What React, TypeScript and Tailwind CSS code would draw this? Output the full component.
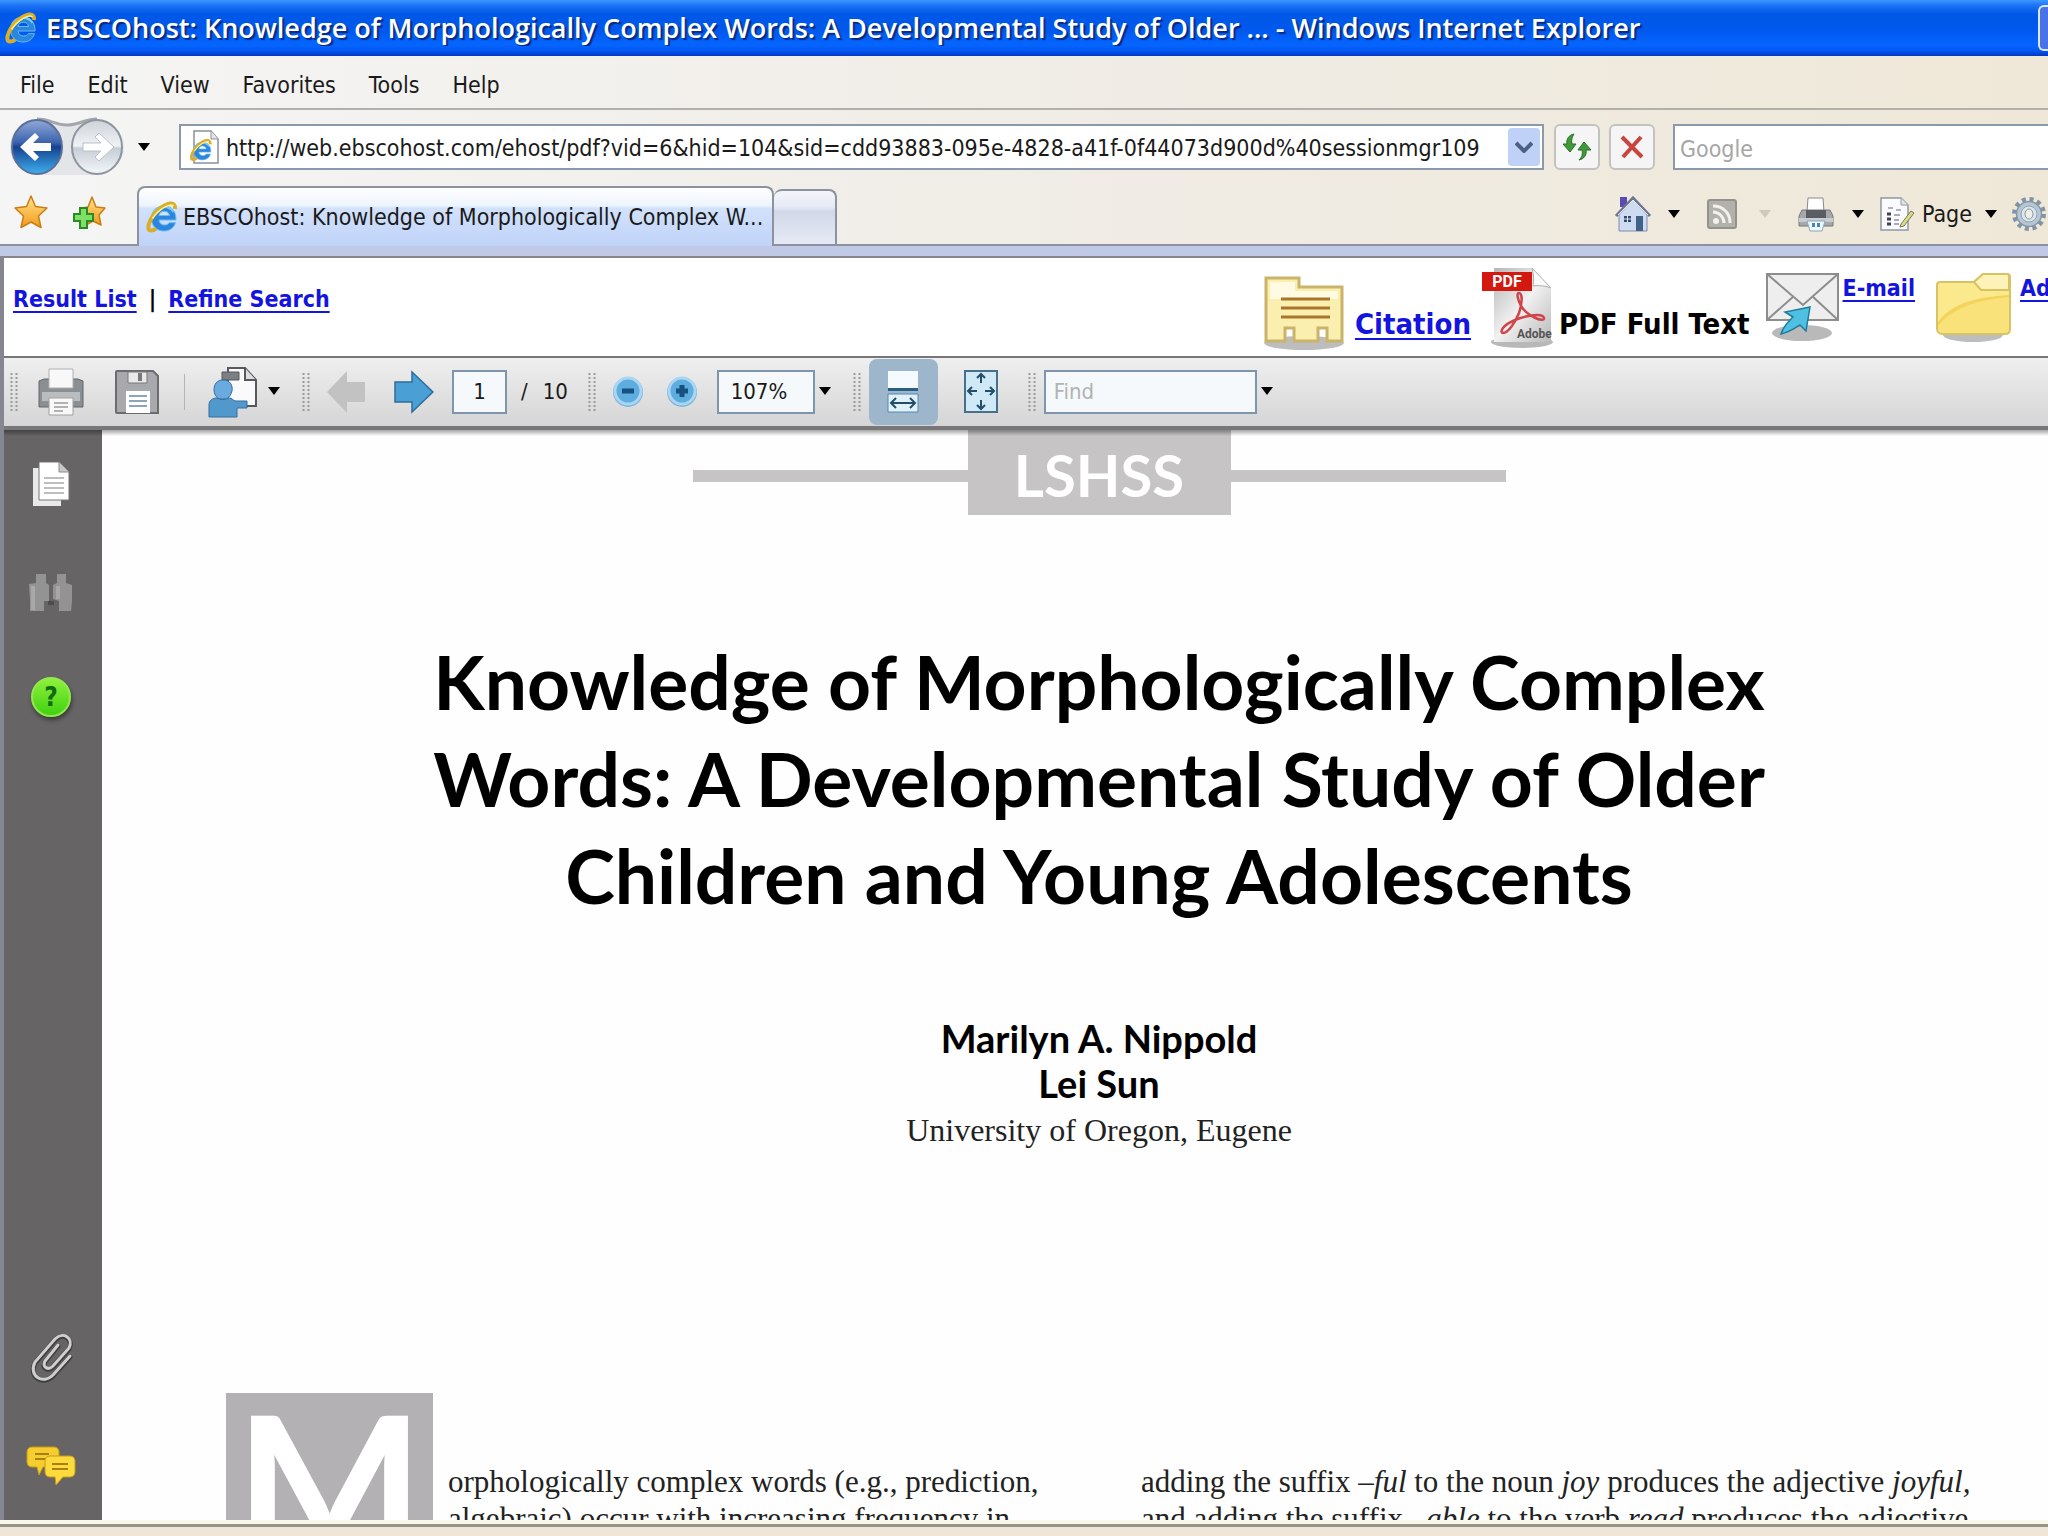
import type { ReactNode } from 'react'

const menus = ['File', 'Edit', 'View', 'Favorites', 'Tools', 'Help']

function Caret({ className = '', dim = false }: { className?: string; dim?: boolean }) {
  return (
    <button aria-label="More options" className={`shrink-0 ${className}`}>
      <svg viewBox="0 0 14 9" className="w-[14px] h-[9px]">
        <path d="M1 0h12L7 8z" fill={dim ? '#cfc9bd' : '#000'} />
      </svg>
    </button>
  )
}

function Grip({ className = '' }: { className?: string }) {
  return (
    <svg viewBox="0 0 8 38" className={`w-2 h-[38px] shrink-0 ${className}`}>
      <path d="M1.5 0v38M6.5 0v38" stroke="#9a9a9a" strokeWidth="2" strokeDasharray="2 2" />
    </svg>
  )
}

function IeLogo({ className = '' }: { className?: string }) {
  return (
    <svg viewBox="0 0 34 34" className={`shrink-0 ${className}`}>
      <path
        d="M31 20H14c.5 3.300 2.500 5 5.500 5 2.300 0 3.800-.8 4.800-2.300H30.500C28.800 28 24.600 31 19 31 11.500 31 6.500 25.800 6.500 18.500S11.500 6 19 6s12.200 5 12 14zM24.500 15.500c-.5-2.700-2.300-4.200-5.200-4.200s-4.800 1.500-5.300 4.200z"
        fill="#2b86dd"
        stroke="#6db9f2"
        strokeWidth="1"
      />
      <path d="M8 14c2-4.500 6-7 11-7 4 0 7.500 1.800 9.500 5" stroke="#7cc8f7" strokeWidth="2" fill="none" />
      <path
        d="M30 9c.6-3.500-1.200-6-5-5.500C18.500 4.300 9 12.500 5 21c-2.500 5.400-2.300 9.500 1.200 9.500 1.500 0 3.300-.7 5-1.900"
        stroke="#d9ae2a"
        strokeWidth="4"
        fill="none"
      />
      <path d="M28.500 6C25 2.500 14 9 7.500 18.500" stroke="#fff08a" strokeWidth="1.500" fill="none" />
    </svg>
  )
}

function NavArrows() {
  return (
    <svg viewBox="0 0 116 60" className="w-[116px] h-[60px]">
      <defs>
        <linearGradient id="back" x1="0" y1="0" x2="0" y2="1">
          <stop offset="0" stopColor="#92a9d8" />
          <stop offset=".42" stopColor="#3a62ad" />
          <stop offset=".5" stopColor="#15418f" />
          <stop offset="1" stopColor="#3fb0f0" />
        </linearGradient>
        <linearGradient id="fwd" x1="0" y1="0" x2="0" y2="1">
          <stop offset="0" stopColor="#cdd2d9" />
          <stop offset=".48" stopColor="#f0f2f5" />
          <stop offset=".52" stopColor="#c6cdd6" />
          <stop offset="1" stopColor="#f4f8fb" />
        </linearGradient>
      </defs>
      <path d="M27 2c14 0 17 6 30 6S74 2 87 2c36 6 36 50 0 56H27C-9 52-9 8 27 2z" fill="#e3e5e8" />
      <path d="M27 2c14 0 17 6 30 6S74 2 87 2" stroke="#a3a7ad" strokeWidth="3" fill="none" />
      <ellipse cx="27" cy="30" rx="25" ry="27" fill="url(#back)" stroke="#5b6f97" strokeWidth="2" />
      <ellipse cx="87" cy="30" rx="25" ry="27" fill="url(#fwd)" stroke="#8f959e" strokeWidth="2" />
      <path d="M10 30l15-14 4 4-6 6h18v8H23l6 6-4 4z" fill="#fff" />
      <path d="M104 30L89 16l-4 4 6 6H73v8h18l-6 6 4 4z" fill="#fff" stroke="#b9c0ca" strokeWidth="1" />
    </svg>
  )
}

function Star({ plus = false }: { plus?: boolean }) {
  return (
    <svg viewBox="0 0 34 34" className="w-[34px] h-[34px]">
      <defs>
        <linearGradient id="star" x1="0" y1="0" x2="0" y2="1">
          <stop offset="0" stopColor="#ffe48a" />
          <stop offset="1" stopColor="#f39a1c" />
        </linearGradient>
      </defs>
      <path
        d={
          plus
            ? 'M20 2l4 10 9 1-6 7 2 10-8-4-7 4 0-10-4-7 6-1z'
            : 'M17 1l4.500 10.500L33 13l-8.500 8L27 32.500 17 27 7 32.500 9.500 21 1 13l11.500-1.500z'
        }
        fill="url(#star)"
        stroke="#c97e14"
        strokeWidth="1.500"
        strokeLinejoin="round"
      />
      {plus && (
        <path
          d="M8 13h7v6h6v7h-6v7H8v-7H2v-7h6z"
          fill="#7fe066"
          stroke="#2a8a26"
          strokeWidth="2"
        />
      )}
    </svg>
  )
}

function HomeIcon() {
  return (
    <svg viewBox="0 0 38 38" className="w-[38px] h-[38px]">
      <path d="M6 2h7v10H6z" fill="#5a4bb5" />
      <path d="M5 19L19 5l14 14v17H5z" fill="#cfdbf0" stroke="#7d8cab" />
      <path d="M2 21L19 3l17 18" stroke="#6f7690" strokeWidth="3" fill="none" />
      <path d="M4 20L19 5l15 15" stroke="#e9edf6" strokeWidth="1" fill="none" />
      <path d="M10 21h7v6h-7z" fill="#30496f" />
      <path d="M13.500 21v6M10 24h7" stroke="#dfe8f7" />
      <path d="M22 21h7v15h-7z" fill="#3f6288" />
    </svg>
  )
}

function RssIcon() {
  return (
    <svg viewBox="0 0 30 30" className="w-[30px] h-[30px]">
      <rect x="1" y="1" width="28" height="28" rx="2" fill="#b3b1ab" stroke="#94928c" strokeWidth="2" />
      <circle cx="9" cy="22" r="3" fill="#f3f1ec" />
      <path d="M6 13c6 0 11 5 11 11M6 7c10 0 17 7 17 17" stroke="#f3f1ec" strokeWidth="3" fill="none" />
    </svg>
  )
}

function PrintIcon() {
  return (
    <svg viewBox="0 0 36 36" className="w-9 h-9">
      <path d="M10 2h15l1 14H9z" fill="#fff" stroke="#8a8a8a" />
      <path d="M4 14h28l3 6v10H1V20z" fill="#a6a8ac" stroke="#75777b" />
      <path d="M8 14h20v8H8z" fill="#5a5d62" />
      <path d="M1 22h34v4H1z" fill="#c9ccd0" />
      <path d="M9 25h18l-3 10H12z" fill="#eef7fd" stroke="#86a9bd" />
      <path d="M14 27h3v4h-3zM19 27h3v4h-3z" fill="#4c88ad" />
    </svg>
  )
}

function PageIcon() {
  return (
    <svg viewBox="0 0 36 36" className="w-9 h-9">
      <path d="M1 2h20l7 7v25H1z" fill="#fbfbfd" stroke="#9098a6" strokeWidth="1.500" />
      <path d="M21 2v7h7" fill="#dfe4ec" stroke="#9098a6" />
      <path d="M8 12h5M16 14h5" stroke="#a9b3c5" strokeWidth="2" />
      <path d="M7 18h4M7 23h4M7 28h4" stroke="#3c4356" strokeWidth="3" />
      <path d="M14 19h6M14 24h5M14 28h5" stroke="#a9a9c0" strokeWidth="2" />
      <path d="M21 28l10-13 3 2-10 13-4 1z" fill="#dcd98a" stroke="#777a55" />
    </svg>
  )
}

function GearIcon() {
  return (
    <svg viewBox="0 0 36 36" className="w-9 h-9">
      <circle cx="18" cy="18" r="14.500" fill="none" stroke="#8195a6" strokeWidth="5" strokeDasharray="4 3.600" />
      <circle cx="18" cy="18" r="12.500" fill="#b6c7d3" stroke="#8397a8" strokeWidth="1.500" />
      <circle cx="18" cy="18" r="8" fill="#dbe6ec" stroke="#8fa3b2" />
      <ellipse cx="18" cy="18" rx="4" ry="5" fill="#f0eee6" stroke="#8398a6" />
    </svg>
  )
}

function CitationIcon() {
  return (
    <svg viewBox="0 0 82 80" className="w-[82px] h-20">
      <ellipse cx="41" cy="70" rx="40" ry="7" fill="#bdbdbd" />
      <path
        d="M3 5h33v9h43v54H64V55h-9v13H31V55h-9v13H3z"
        fill="#fbefb0"
        stroke="#c9b46a"
        strokeWidth="3"
      />
      <path d="M7 9h25v9h43v8H7z" fill="#fffbe2" />
      <path d="M18 26h49M18 35h49M18 44h49" stroke="#a8752a" strokeWidth="3" />
    </svg>
  )
}

function PdfIcon() {
  return (
    <svg viewBox="0 0 72 84" className="w-[72px] h-[84px]">
      <defs>
        <linearGradient id="sheet" x1="0" y1="0" x2="1" y2="1">
          <stop offset="0" stopColor="#b5b5b5" />
          <stop offset=".5" stopColor="#f1f1f1" />
          <stop offset="1" stopColor="#b9b9b9" />
        </linearGradient>
      </defs>
      <ellipse cx="41" cy="76" rx="31" ry="6" fill="#b8b8b8" />
      <path d="M13 2h38l19 20v54H13z" fill="url(#sheet)" />
      <path d="M51 2c2 7 2 13 1 18 7-1 13 0 18 2z" fill="#fafafa" stroke="#b0b0b0" />
      <path d="M1 6h50v19H1z" fill="#d3180f" />
      <text x="26" y="21" textAnchor="middle" fontFamily="Roboto" fontWeight="700" fontSize="16" fill="#fff">
        PDF
      </text>
      <path
        d="M38 27c4 0 3 12 0 20-4 10-11 20-16 20-4-1 0-8 12-13 12-5 28-7 29-2s-16-1-23-12c-3-6-5-13-2-13z"
        fill="none"
        stroke="#d1444a"
        strokeWidth="2.500"
      />
      <text x="36" y="72" fontFamily="Roboto" fontSize="12" fill="#555">
        Adobe
      </text>
    </svg>
  )
}

function MailIcon() {
  return (
    <svg viewBox="0 0 74 72" className="w-[74px] h-[72px]">
      <ellipse cx="36" cy="62" rx="30" ry="8" fill="#b9b9b9" />
      <path d="M1 3h71v46H1z" fill="#eeeeee" stroke="#8d8d8d" strokeWidth="2" />
      <path d="M1 3l36 31L72 3M1 49l27-24M72 49L46 25" fill="none" stroke="#8d8d8d" strokeWidth="2" />
      <path d="M44 36l-4 24-6-6c-5 3-10 7-19 9 3-9 8-13 12-17l-8-5z" fill="#4fc0e2" stroke="#1c7d9e" strokeWidth="1.500" />
    </svg>
  )
}

function FolderIcon() {
  return (
    <svg viewBox="0 0 76 72" className="w-[76px] h-[72px]">
      <ellipse cx="38" cy="63" rx="30" ry="7" fill="#bdbdbd" />
      <path
        d="M2 13c0-2 1-3 3-3h34l9-8h24c2 0 3 1 3 3v52c0 3-2 5-5 5H8c-4 0-6-2-6-6z"
        fill="#fbe98e"
        stroke="#d8c264"
        strokeWidth="2"
      />
      <path d="M39 10l7 8h28V5c0-2-1-3-2-3H48z" fill="#fdf3b8" stroke="#d8c264" strokeWidth="2" />
      <path d="M3 50C16 32 40 25 74 23v34c0 3-2 4-5 4H8c-4 0-5-2-5-5z" fill="#f3d35a" />
      <path d="M3 54c12-16 36-26 71-29v32c0 3-2 4-5 4H8c-4 0-5-2-5-5z" fill="#f9e27a" />
    </svg>
  )
}

function PdfPrintIcon() {
  return (
    <svg viewBox="0 0 48 50" className="w-12 h-[50px]">
      <path d="M2 14l5-2h34l5 2v26H2z" fill="#8b8f92" stroke="#62666a" />
      <path d="M5 25h38v9H5z" fill="#b9bdc0" />
      <path d="M12 2h24v19H12z" fill="#f8f8f8" stroke="#b0b0b0" />
      <path d="M12 31h24v17H12z" fill="#f8f8f8" stroke="#a0a0a0" />
      <path d="M17 36h14M17 40h14M17 44h9" stroke="#9b9b9b" strokeWidth="1.500" />
    </svg>
  )
}

function SaveIcon() {
  return (
    <svg viewBox="0 0 46 46" className="w-[46px] h-[46px]">
      <path d="M3 2h36l5 5v37H3c-1 0-1-1-1-1V3s0-1 1-1z" fill="#a8a9ad" stroke="#6b6c70" strokeWidth="2" />
      <path d="M14 3h19v11H14z" fill="#e8e8e8" stroke="#77787c" />
      <path d="M24 4h4v8h-4z" fill="#77787c" />
      <path d="M12 22h24v22H12z" fill="#fff" />
      <path d="M15 27h18M15 32h18M15 37h18" stroke="#8aa6b8" strokeWidth="2" />
    </svg>
  )
}

function ShareIcon() {
  return (
    <svg viewBox="0 0 50 52" className="w-[50px] h-[52px]">
      <path d="M20 2h17l11 12v26H20z" fill="#fafafa" stroke="#55585c" strokeWidth="2" />
      <path d="M37 2v12h11" fill="#ddd" stroke="#55585c" strokeWidth="2" />
      <path d="M14 6h17v8H14z" fill="#7b7e83" stroke="#55585c" />
      <path d="M15 14c7 0 10 5 9 11-1 4-3 6-5 8h-8c-3-2-5-5-5-9 0-6 3-10 9-10z" fill="#6aaade" stroke="#336f9f" />
      <path d="M1 51V39c0-5 4-7 8-7 3 2 8 2 11 0 5 0 5 3 8 3h11v7H29v9z" fill="#5198cd" stroke="#336f9f" />
    </svg>
  )
}

function PageArrow({ back = false }: { back?: boolean }) {
  return (
    <svg viewBox="0 0 40 44" className="w-10 h-11">
      {back ? (
        <path d="M1 22L21 1v11h18v20H21v11z" fill="#c2c2c2" />
      ) : (
        <path d="M39 22L18 2v10H1v20h17v10z" fill="#4a9fd4" stroke="#2c6d9b" strokeWidth="1.500" />
      )}
    </svg>
  )
}

function ZoomGlyph({ plus = false }: { plus?: boolean }) {
  return (
    <svg viewBox="0 0 32 32" className="w-8 h-8">
      <circle cx="16" cy="16" r="15" fill="#7db4d8" />
      <circle cx="16" cy="15" r="13" fill="#5facdf" stroke="#a9d6f2" strokeWidth="3" />
      <path d={plus ? 'M10 15h12M16 9v12' : 'M10 15h12'} stroke="#17517f" strokeWidth="5" />
    </svg>
  )
}

function FitWidthIcon() {
  return (
    <svg viewBox="0 0 36 44" className="w-9 h-11">
      <path d="M3 1h30v18H3z" fill="#f4fafd" />
      <path d="M3 18h30v3H3z" fill="#2a5f84" />
      <path d="M3 24h30v18H3z" fill="#e1f1fa" stroke="#5688aa" />
      <path d="M6 33h24M11 28l-5 5 5 5M25 28l5 5-5 5" stroke="#234d69" strokeWidth="2" fill="none" />
    </svg>
  )
}

function FitPageIcon() {
  return (
    <svg viewBox="0 0 36 44" className="w-9 h-11">
      <path d="M2 1h32v41H2z" fill="#cfe9f7" stroke="#47708b" strokeWidth="2" />
      <path
        d="M18 4v9M14 8l4-4 4 4M18 39v-9M14 35l4 4 4-4M5 21h9M9 17l-4 4 4 4M31 21h-9M27 17l4 4-4 4"
        stroke="#234d69"
        strokeWidth="2"
        fill="none"
      />
    </svg>
  )
}

function SideButton({ label, children }: { label: string; children: ReactNode }) {
  return (
    <button aria-label={label} className="w-[52px] h-[52px] flex items-center justify-center">
      {children}
    </button>
  )
}

function TitleBar() {
  return (
    <header className="h-14 shrink-0 flex items-center pl-1 gap-2 overflow-hidden bg-[linear-gradient(to_bottom,#3c98ff_0%,#1c72f4_10%,#0058e6_25%,#0058ee_55%,#0566ff_80%,#0458f4_90%,#0038c4_100%)]">
      <IeLogo className="w-[34px] h-9" />
      <h1 className="flex-1 whitespace-nowrap overflow-hidden text-white font-semibold text-[27px] leading-9 font-['Open_Sans',sans-serif] [text-shadow:2px_2px_1px_#0a2a80]">
        EBSCOhost: Knowledge of Morphologically Complex Words: A Developmental Study of Older ... - Windows Internet
        Explorer
      </h1>
      <button
        aria-label="Minimize"
        className="w-[10px] h-[46px] shrink-0 rounded-l-md border-2 border-r-0 border-[#dbe6ff] bg-[#4a73e8]"
      />
    </header>
  )
}

function AddressBar() {
  return (
    <div className="h-[74px] shrink-0 flex items-center pl-[10px]">
      <button aria-label="Back and forward">
        <NavArrows />
      </button>
      <Caret className="ml-[11px]" />
      <div className="ml-7 flex-1 flex items-center h-[46px] border-2 border-[#8a9aac] bg-white pl-2">
        <svg viewBox="0 0 30 34" className="w-[30px] h-[34px] shrink-0">
          <path d="M5 1h17l7 8v24H5z" fill="#fff" stroke="#8b919b" strokeWidth="1.500" />
          <path d="M22 1v8h7" fill="#e6e6e6" stroke="#8b919b" />
          <svg x="0" y="7" width="24" height="26">
            <IeLogo className="w-6 h-[26px]" />
          </svg>
        </svg>
        <input
          aria-label="Address"
          className="flex-1 min-w-0 ml-[7px] pt-[3px] text-[23px] outline-none bg-transparent"
          defaultValue="http://web.ebscohost.com/ehost/pdf?vid=6&hid=104&sid=cdd93883-095e-4828-a41f-0f44073d900d%40sessionmgr109"
        />
        <button
          aria-label="Show addresses"
          className="w-8 h-[38px] mr-[2px] flex items-center justify-center rounded-sm bg-[#c0d1f8]"
        >
          <svg viewBox="0 0 18 12" className="w-[18px] h-3">
            <path d="M1 2l8 8 8-8" fill="none" stroke="#4a6185" strokeWidth="4" />
          </svg>
        </button>
      </div>
      <button
        aria-label="Refresh"
        className="ml-[10px] w-[46px] h-[46px] flex items-center justify-center rounded-md border-2 border-[#c3c2c0] bg-[#f6f5f5]"
      >
        <svg viewBox="0 0 30 28" className="w-[30px] h-7">
          <path d="M12 1C7 2 4 6 5 11H1l7 8 6-8h-4c-1-4 0-7 2-10z" fill="#3f9a3a" stroke="#2c6e29" />
          <path d="M17 27c5-1 8-5 7-10h5l-7-8-6 8h4c1 4 0 7-3 10z" fill="#3f9a3a" stroke="#2c6e29" />
        </svg>
      </button>
      <button
        aria-label="Stop"
        className="ml-[9px] w-[46px] h-[46px] flex items-center justify-center rounded-md border-2 border-[#c3c2c0] bg-[#f6f5f5]"
      >
        <svg viewBox="0 0 24 24" className="w-6 h-6">
          <path d="M2 2l20 20M21 2L3 22" stroke="#c9433f" strokeWidth="4" />
        </svg>
      </button>
      <input
        aria-label="Search"
        placeholder="Google"
        className="ml-[18px] w-[375px] h-[46px] px-[5px] pt-[3px] text-[23px] outline-none border-2 border-r-0 border-[#8a9aac] bg-white placeholder:text-[#a6a6a6]"
      />
    </div>
  )
}

function TabRow() {
  return (
    <div className="h-[62px] shrink-0 flex items-end border-b-2 border-[#8d92a0]">
      <div className="self-center flex items-center pl-[14px] pb-1 gap-6 w-[137px]">
        <button aria-label="Favorites Center">
          <Star />
        </button>
        <button aria-label="Add to Favorites">
          <Star plus />
        </button>
      </div>
      <button className="w-[637px] h-[60px] -mb-[2px] flex items-center pl-[6px] gap-1 whitespace-nowrap text-[23px] rounded-t-lg border-2 border-b-0 border-[#8d92a0] bg-[linear-gradient(to_bottom,#ffffff_0%,#eef4fe_30%,#d3e2fb_35%,#bfd3f9_100%)]">
        <IeLogo className="w-[34px] h-9" />
        EBSCOhost: Knowledge of Morphologically Complex W...
      </button>
      <button
        aria-label="New tab"
        className="w-[63px] h-[55px] rounded-t-lg border-2 border-b-0 border-l-0 border-[#8d92a0] bg-[linear-gradient(to_bottom,#f4f6fb_0%,#e6eaf5_30%,#d2d8e8_38%,#e6eaf6_100%)]"
      />
      <div className="ml-auto self-center flex items-center shrink-0 text-[23px] pr-px">
        <button aria-label="Home">
          <HomeIcon />
        </button>
        <Caret className="ml-[15px]" />
        <button aria-label="Feeds" className="ml-[26px]">
          <RssIcon />
        </button>
        <Caret dim className="ml-[21px]" />
        <button aria-label="Print" className="ml-[26px]">
          <PrintIcon />
        </button>
        <Caret className="ml-[17px]" />
        <button className="ml-[15px] flex items-center gap-[6px]">
          <PageIcon />
          Page
        </button>
        <Caret className="ml-3" />
        <button aria-label="Tools" className="ml-[13px]">
          <GearIcon />
        </button>
      </div>
    </div>
  )
}

function ResultHeader() {
  const link = 'text-[#1414e0] underline decoration-2 underline-offset-4'
  return (
    <div className="h-[100px] shrink-0 flex bg-white border-b-2 border-[#77777a] pl-[9px] font-bold whitespace-nowrap text-black">
      <nav className="pt-[25px] text-[23px] leading-8 flex gap-3">
        <a href="#results" className={link}>
          Result List
        </a>
        <span>|</span>
        <a href="#refine" className={link}>
          Refine Search
        </a>
      </nav>
      <div className="ml-auto flex items-start shrink-0 text-[29px] leading-9">
        <a href="#citation" className={`flex items-start ${link}`}>
          <span className="mt-[15px]">
            <CitationIcon />
          </span>
          <span className="ml-[10px] mt-[48px]">Citation</span>
        </a>
        <span className="flex items-start ml-[10px]">
          <span className="mt-2">
            <PdfIcon />
          </span>
          <span className="ml-[6px] mt-[48px]">PDF Full Text</span>
        </span>
        <a href="#email" className={`flex items-start ml-4 text-[23px] leading-8 ${link}`}>
          <span className="mt-[13px]">
            <MailIcon />
          </span>
          <span className="ml-[3px] mt-[14px]">E-mail</span>
        </a>
        <a href="#folder" className={`flex items-start ml-5 text-[23px] leading-8 ${link}`}>
          <span className="mt-[14px]">
            <FolderIcon />
          </span>
          <span className="ml-[9px] mt-[14px] w-[28px] overflow-hidden">Add</span>
        </a>
      </div>
    </div>
  )
}

function PdfToolbar() {
  const box = 'h-[44px] border-2 border-[#7d96ad] bg-[#f5f9fb] text-[22px] outline-none'
  return (
    <div className="h-[72px] shrink-0 flex items-center pl-[6px] pb-px border-b-4 border-[#77777a] bg-[linear-gradient(to_bottom,#efefef,#d6d5d6)] text-[22px]">
      <Grip />
      <button aria-label="Print document" className="ml-[19px]">
        <PdfPrintIcon />
      </button>
      <button aria-label="Save a copy" className="ml-[29px]">
        <SaveIcon />
      </button>
      <span className="ml-6 w-px h-9 bg-[#b5b5b5]" />
      <button aria-label="Collaborate" className="ml-[23px]">
        <ShareIcon />
      </button>
      <Caret className="ml-[9px]" />
      <Grip className="ml-[21px]" />
      <button aria-label="Previous page" className="ml-[16px]">
        <PageArrow back />
      </button>
      <button aria-label="Next page" className="ml-[28px]">
        <PageArrow />
      </button>
      <input aria-label="Page number" defaultValue="1" className={`ml-[18px] w-[55px] text-center ${box}`} />
      <span className="ml-[14px]">/</span>
      <span className="ml-[15px] w-[45px]">10</span>
      <Grip />
      <button aria-label="Zoom out" className="ml-4">
        <ZoomGlyph />
      </button>
      <button aria-label="Zoom in" className="ml-[22px]">
        <ZoomGlyph plus />
      </button>
      <input aria-label="Zoom level" defaultValue="107%" className={`ml-[19px] w-[98px] px-3 ${box}`} />
      <Caret className="ml-[3px]" />
      <Grip className="ml-[21px]" />
      <button
        aria-label="Fit width"
        className="ml-2 w-[69px] h-[66px] flex items-center justify-center rounded-lg bg-[#9db6cb]"
      >
        <FitWidthIcon />
      </button>
      <button aria-label="Fit page" className="ml-[25px]">
        <FitPageIcon />
      </button>
      <Grip className="ml-[29px]" />
      <input
        aria-label="Find"
        placeholder="Find"
        className={`ml-2 w-[213px] px-2 placeholder:text-[#b2b2b2] ${box}`}
      />
      <Caret className="ml-[3px]" />
    </div>
  )
}

function Sidebar() {
  return (
    <aside className="w-[98px] shrink-0 flex flex-col items-center py-[28px] pr-1 bg-[#666465]">
      <SideButton label="Pages">
        <svg viewBox="0 0 38 46" className="w-[38px] h-[46px]">
          <path d="M1 7h28v38H1z" fill="#e9e9e9" />
          <path d="M7 1h20l10 10v28H7z" fill="#fff" stroke="#777" />
          <path d="M27 1v10h10" fill="#c9c9c9" stroke="#888" />
          <path d="M12 17h20M12 22h20M12 27h20M12 32h20" stroke="#a9a9a9" strokeWidth="1.500" />
        </svg>
      </SideButton>
      <div className="mt-[57px]">
        <SideButton label="Search document">
          <svg viewBox="0 0 46 40" className="w-[46px] h-10">
            <path
              d="M8 1h10v9l3 2v16h-5v10H2V28L1 11l7-1zM29 1h9v9l6 2v16l-1 10H31V28l-6-2V12l4-2z"
              fill="#949393"
            />
            <path d="M5 13v24M30 13v13" stroke="#a9a8a8" strokeWidth="4" />
            <path d="M20 28h6v4h-6z" fill="#4d4c4c" />
          </svg>
        </SideButton>
      </div>
      <div className="mt-[52px]">
        <SideButton label="Help">
          <span className="w-10 h-10 rounded-full border-2 border-[#92e84f] bg-[linear-gradient(to_bottom,#8ff03c,#3fd210)] shadow-[1px_3px_4px_#3a3a3a] flex items-center justify-center font-bold text-[26px] text-[#0f6a10]">
            ?
          </span>
        </SideButton>
      </div>
      <div className="mt-auto">
        <SideButton label="Attachments">
          <svg viewBox="0 0 44 50" className="w-11 h-[50px]">
            <g fill="none" strokeLinecap="round">
              <path
                d="M41 24L24 43c-10 10-25 1-18-13L26 7c8-8 19-1 14 9L24 34c-5 5-11 1-8-5l13-16"
                stroke="#3f3f3f"
                strokeWidth="5"
              />
              <path
                d="M41 23L24 42c-10 10-25 1-18-13L26 6c8-8 19-1 14 9L24 33c-5 5-11 1-8-5l13-16"
                stroke="#cfcfcf"
                strokeWidth="3"
              />
            </g>
          </svg>
        </SideButton>
      </div>
      <div className="mt-[56px]">
        <SideButton label="Comments">
          <svg viewBox="0 0 50 40" className="w-[50px] h-10">
            <path d="M6 1h22c3 0 5 2 5 5v10c0 3-2 5-5 5H17l-4 8-2-8H6c-3 0-5-2-5-5V6c0-3 2-5 5-5z" fill="#f6cd2f" stroke="#c79a17" />
            <path d="M9 8h14M9 13h10" stroke="#a77f17" strokeWidth="2" />
            <path d="M24 10h20c3 0 5 2 5 5v11c0 3-2 5-5 5h-7l-7 8-1-8h-5c-3 0-5-2-5-5V15c0-3 2-5 5-5z" fill="#fddb3d" stroke="#c79a17" />
            <path d="M26 18h16M26 23h16" stroke="#a77f17" strokeWidth="2" />
          </svg>
        </SideButton>
      </div>
    </aside>
  )
}

function Article() {
  return (
    <article className="flex-1 min-w-0 overflow-hidden bg-[#fefefe] pl-[124px] pr-[76px] text-black">
      <div className="flex items-center justify-center">
        <span className="w-[275px] h-3 mt-[6px] bg-[#c6c4c5]" />
        <span className="w-[263px] h-[85px] pt-1 flex items-center justify-center bg-[#c6c4c5] text-white font-bold text-[58px] font-[Lato,sans-serif]">
          LSHSS
        </span>
        <span className="w-[275px] h-3 mt-[6px] bg-[#c6c4c5]" />
      </div>
      <h2 className="mt-[118px] text-center font-bold text-[75px] leading-[97px] font-[Lato,sans-serif]">
        Knowledge of Morphologically Complex
        <br />
        Words: A Developmental Study of Older
        <br />
        Children and Young Adolescents
      </h2>
      <div className="mt-[92px] text-center font-bold text-[38px] leading-[45px] font-[Lato,sans-serif]">
        <p>Marilyn A. Nippold</p>
        <p>Lei Sun</p>
      </div>
      <p className="text-center text-[32px] leading-[48px] text-[#222] font-['Liberation_Serif',serif]">
        University of Oregon, Eugene
      </p>
      <div className="mt-[239px] grid grid-cols-2 gap-[84px] text-[31px] leading-[37px] text-[#222] whitespace-nowrap font-['Liberation_Serif',serif]">
        <div className="flex gap-[15px]">
          <span className="w-[207px] h-[207px] shrink-0 flex justify-center bg-[#b3b1b3] text-white font-bold text-[200px] leading-[180px] font-[Lato,sans-serif]">
            M
          </span>
          <p className="pt-[70px]">
            orphologically complex words (e.g., prediction,
            <br />
            algebraic) occur with increasing frequency in
          </p>
        </div>
        <p className="pt-[70px]">
          adding the suffix –<i>ful</i> to the noun <i>joy</i> produces the adjective <i>joyful,</i>
          <br />
          and adding the suffix –<i>able</i> to the verb <i>read</i> produces the adjective
        </p>
      </div>
    </article>
  )
}

export default function App() {
  return (
    <div className="h-screen flex flex-col overflow-hidden text-[#1a1a1a] bg-[linear-gradient(to_right,#f5f5f5,#f0ece5_55%,#efe8d8)] font-['DejaVu_Sans_Condensed','DejaVu_Sans',sans-serif]">
      <TitleBar />
      <nav className="h-[54px] shrink-0 flex items-center pl-5 pt-[6px] gap-[33px] text-[23px] border-b-2 border-[#b1b0ac]">
        {menus.map(name => (
          <button key={name}>{name}</button>
        ))}
      </nav>
      <AddressBar />
      <TabRow />
      <div className="h-[10px] shrink-0 bg-[#c0c9e6]" />
      <main className="flex-1 min-h-0 flex flex-col border-t-2 border-l-4 border-[#858690]">
        <ResultHeader />
        <PdfToolbar />
        <div className="h-[6px] -mb-[6px] shrink-0 z-10 bg-[linear-gradient(to_bottom,#00000059,#00000000)]" />
        <div className="flex-1 min-h-0 flex">
          <Sidebar />
          <Article />
        </div>
      </main>
      <footer className="h-4 shrink-0 border-t-4 border-[#f8f7ea] bg-[#efe6d8]">
        <div className="h-[3px] bg-[#96948a]" />
      </footer>
    </div>
  )
}
